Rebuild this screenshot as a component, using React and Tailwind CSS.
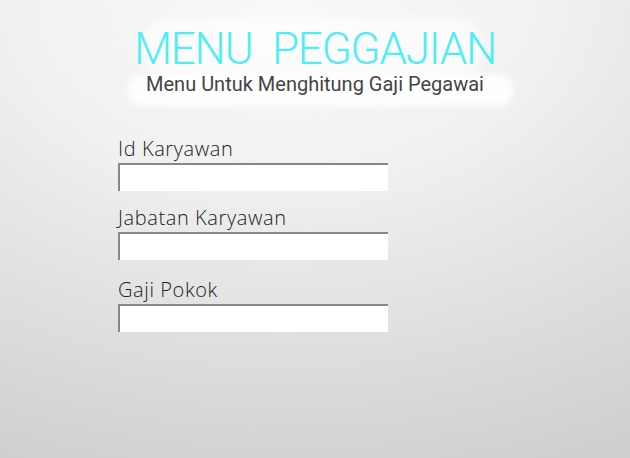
import React from "react";

const fields = [
  { label: "Id Karyawan", gap: "mt-0" },
  { label: "Jabatan Karyawan", gap: "mt-[13px]" },
  { label: "Gaji Pokok", gap: "mt-[16px]" },
];

export default function App() {
  return (
    <div className="relative h-[458px] w-full overflow-hidden bg-[radial-gradient(ellipse_120%_110%_at_45%_0%,#f9f9f9_0%,#f1f1f1_35%,#dedede_70%,#cecece_100%)]">
      {/* brush stroke behind the header */}
      <div className="absolute left-[140px] top-[18px] h-[60px] w-[345px] rounded-[30px] bg-white/70 blur-[6px]" />
      <div className="absolute left-[128px] top-[74px] h-[32px] w-[385px] rounded-[14px] bg-white/90 blur-[3px]" />

      <div className="relative flex flex-col items-center pt-[26px]">
        <h1 className="font-['Roboto',sans-serif] text-[44px] font-light leading-[46px] tracking-[-1.2px] text-[#4eeef8] [word-spacing:10px]">
          MENU PEGGAJIAN
        </h1>
        <p className="font-['Roboto',sans-serif] text-[20px] leading-[24px] text-[#444444]">
          Menu Untuk Menghitung Gaji Pegawai
        </p>
      </div>

      <div className="relative mt-[39px] flex flex-col pl-[118px]">
        {fields.map((f) => (
          <div key={f.label} className={"flex flex-col " + f.gap}>
            <label className="font-['Open_Sans',sans-serif] text-[20px] font-light leading-[28px] tracking-[0.6px] text-[#222222]">
              {f.label}
            </label>
            <input className="h-[28px] w-[270px] border-l-2 border-t-2 border-[#888888] bg-white outline-none" />
          </div>
        ))}
      </div>
    </div>
  );
}
